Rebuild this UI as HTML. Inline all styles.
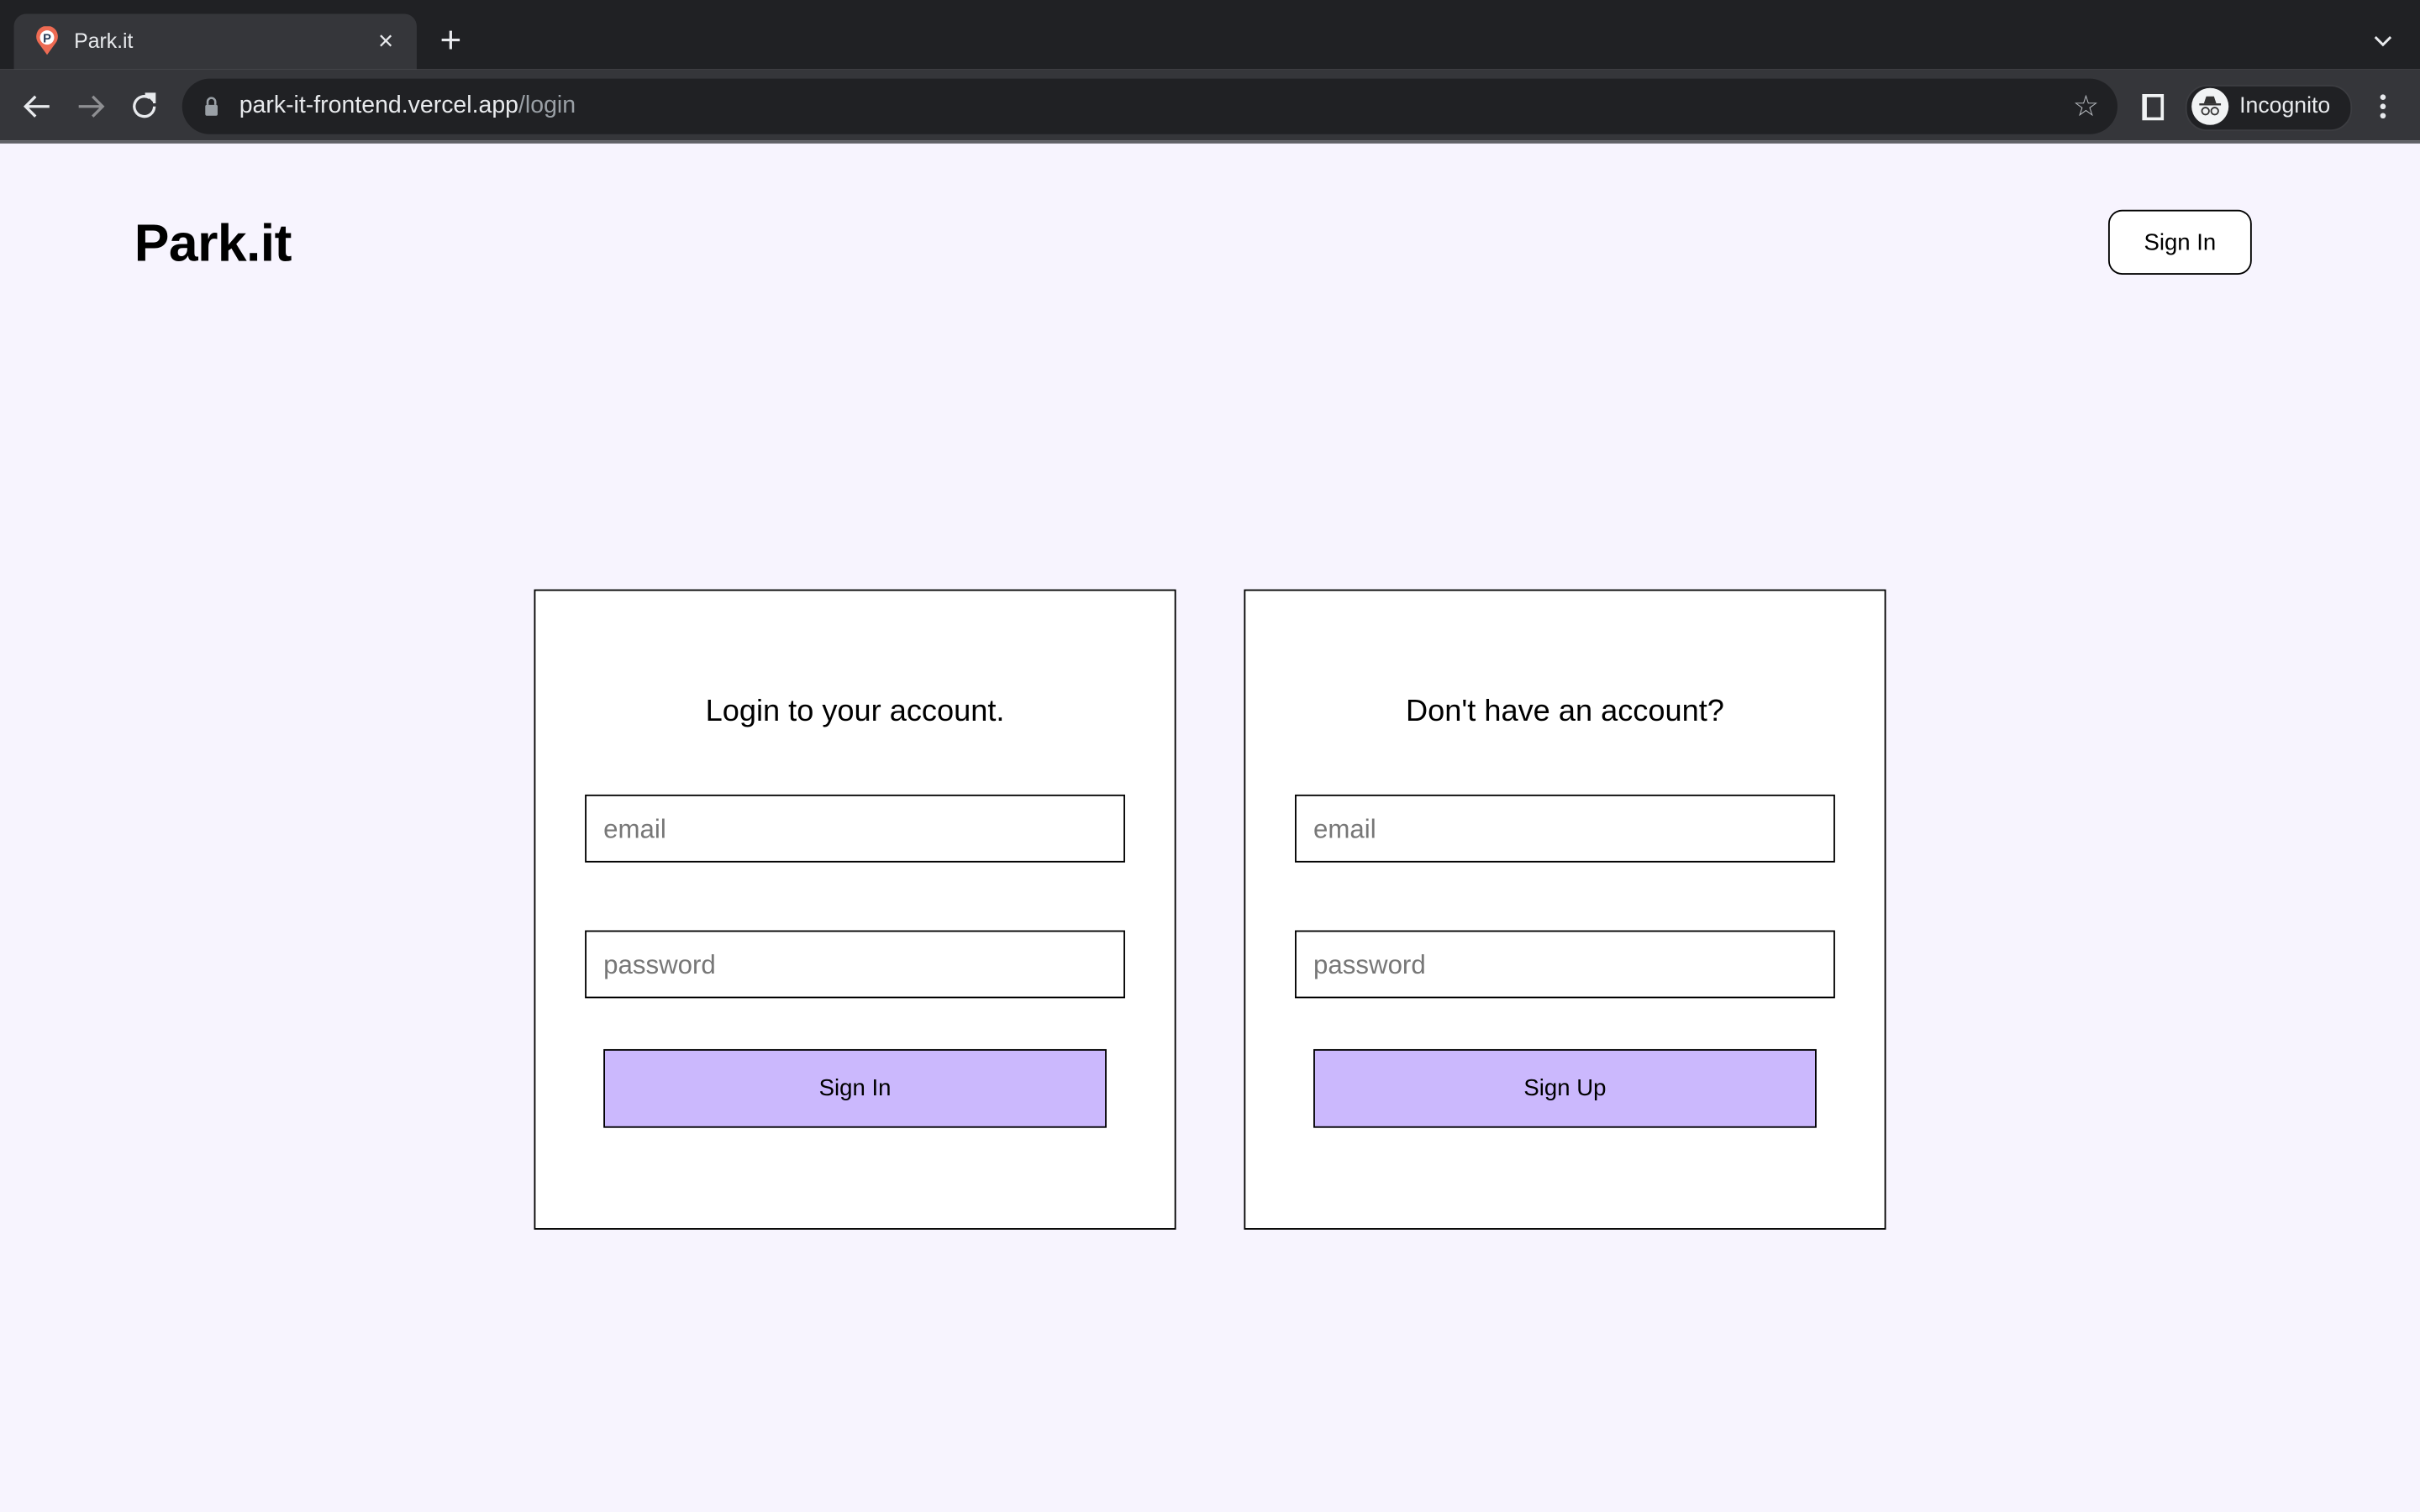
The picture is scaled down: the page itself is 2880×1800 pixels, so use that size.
<!DOCTYPE html>
<html><head><meta charset="utf-8"><style>
html,body{margin:0;padding:0;width:2880px;height:1800px;overflow:hidden;background:#f7f4fe;font-family:"Liberation Sans",sans-serif}
#w{position:absolute;left:0;top:0;width:1568px;height:980px;transform:scale(1.836735);transform-origin:0 0}
.a{position:absolute}
.card{position:absolute;top:382px;width:414px;height:413px;border:1px solid #000;background:#fff}
.card h2{position:absolute;top:67px;left:0;right:0;text-align:center;font-weight:normal;font-size:19.7px;margin:0}
.inp{position:absolute;left:32px;width:348px;height:42px;border:1px solid #000;background:#fff;font-size:17px;color:#777;line-height:43px;text-indent:11px}
.btn{position:absolute;left:44px;top:297px;width:324px;height:49px;border:1px solid #000;background:#cbb8fd;text-align:center;line-height:49px;font-size:15px}
</style></head><body><div id="w">
<div class="a" style="left:0;top:0;width:1568px;height:45px;background:#202124"></div>
<div class="a" style="left:9px;top:9px;width:261px;height:36px;background:#35363a;border-radius:8px 8px 0 0"></div>
<svg class="a" style="left:23px;top:17px" width="15" height="19" viewBox="0 0 15 19"><path d="M7.5 18.5 L2 11 A7 7 0 1 1 13 11 Z" fill="#ee6b53"/><circle cx="7.5" cy="7.3" r="4.6" fill="#fff"/><text x="7.5" y="10.5" font-size="8" font-weight="bold" text-anchor="middle" fill="#2a3b57" font-family="Liberation Sans">P</text></svg>
<div class="a" style="left:48px;top:19px;color:#e8eaed;font-size:13.5px">Park.it</div>
<div class="a" style="left:245px;top:17px;color:#e8eaed;font-size:17px">×</div>
<div class="a" style="left:285px;top:13px;color:#e8eaed;font-size:24px;font-weight:300">+</div>
<svg class="a" style="left:1538px;top:22px" width="12" height="9"><path d="M1 2 L6 7 L11 2" stroke="#e8eaed" stroke-width="1.6" fill="none"/></svg>
<div class="a" style="left:0;top:45px;width:1568px;height:46px;background:#35363a"></div>
<div class="a" style="left:0;top:91px;width:1568px;height:2px;background:#5f6065"></div>
<svg class="a" style="left:14px;top:59px" width="100" height="20" fill="none" stroke-width="1.8"><path d="M18 10 H3 M9 3.5 L2.5 10 L9 16.5" stroke="#e8eaed"/><path d="M37 10 H52 M46 3.5 L52.5 10 L46 16.5" stroke="#8e8f92"/><path d="M86 10 A6.5 6.5 0 1 1 83 4.5" stroke="#e8eaed"/><path d="M80 2 L86 2 L86 8" stroke="#e8eaed" fill="#e8eaed"/></svg>
<div class="a" style="left:118px;top:51px;width:1254px;height:36px;background:#202124;border-radius:18px"></div>
<svg class="a" style="left:132px;top:62px" width="10" height="14"><path d="M2.5 6 V4 A2.5 2.5 0 0 1 7.5 4 V6" stroke="#9aa0a6" stroke-width="1.4" fill="none"/><rect x="1" y="6" width="8" height="7" rx="1" fill="#9aa0a6"/></svg>
<div class="a" style="left:155px;top:60px;font-size:15.5px;color:#e8eaed">park-it-frontend.vercel.app<span style="color:#9aa0a6">/login</span></div>
<div class="a" style="left:1343px;top:58px;color:#bdc1c6;font-size:19px">☆</div>
<div class="a" style="left:1388px;top:61px;height:13px;border:2px solid #f1f3f4;border-left-width:3px;box-sizing:content-box;width:9px"></div>
<div class="a" style="left:1416px;top:55px;width:106px;height:28px;border-radius:14px;background:#202124;border:1px solid #3c3d41"></div>
<div class="a" style="left:1420px;top:57px;width:24px;height:24px;border-radius:12px;background:#f1f3f4"></div>
<svg class="a" style="left:1422px;top:59px" width="20" height="20"><path d="M6 8 L7.5 3.5 H12.5 L14 8 Z" fill="#333"/><rect x="3" y="8" width="14" height="1.3" fill="#333"/><circle cx="7" cy="13" r="2.3" stroke="#333" fill="none"/><circle cx="13" cy="13" r="2.3" stroke="#333" fill="none"/></svg>
<div class="a" style="left:1451px;top:61px;color:#e8eaed;font-size:14.5px">Incognito</div>
<svg class="a" style="left:1541px;top:60px" width="6" height="18" fill="#e8eaed"><circle cx="3" cy="3" r="1.8"/><circle cx="3" cy="9" r="1.8"/><circle cx="3" cy="15" r="1.8"/></svg>

<div class="a" style="left:87px;top:139px;font-size:34px;font-weight:bold;letter-spacing:-0.3px">Park.it</div>
<div class="a" style="left:1366px;top:136px;width:91px;height:40px;border:1px solid #000;border-radius:9px;background:#fff;text-align:center;line-height:41px;font-size:15px">Sign In</div>

<div class="card" style="left:346px"><h2>Login to your account.</h2>
<div class="inp" style="top:132px">email</div><div class="inp" style="top:220px">password</div><div class="btn">Sign In</div></div>
<div class="card" style="left:806px"><h2>Don't have an account?</h2>
<div class="inp" style="top:132px">email</div><div class="inp" style="top:220px">password</div><div class="btn">Sign Up</div></div>
</div></body></html>
